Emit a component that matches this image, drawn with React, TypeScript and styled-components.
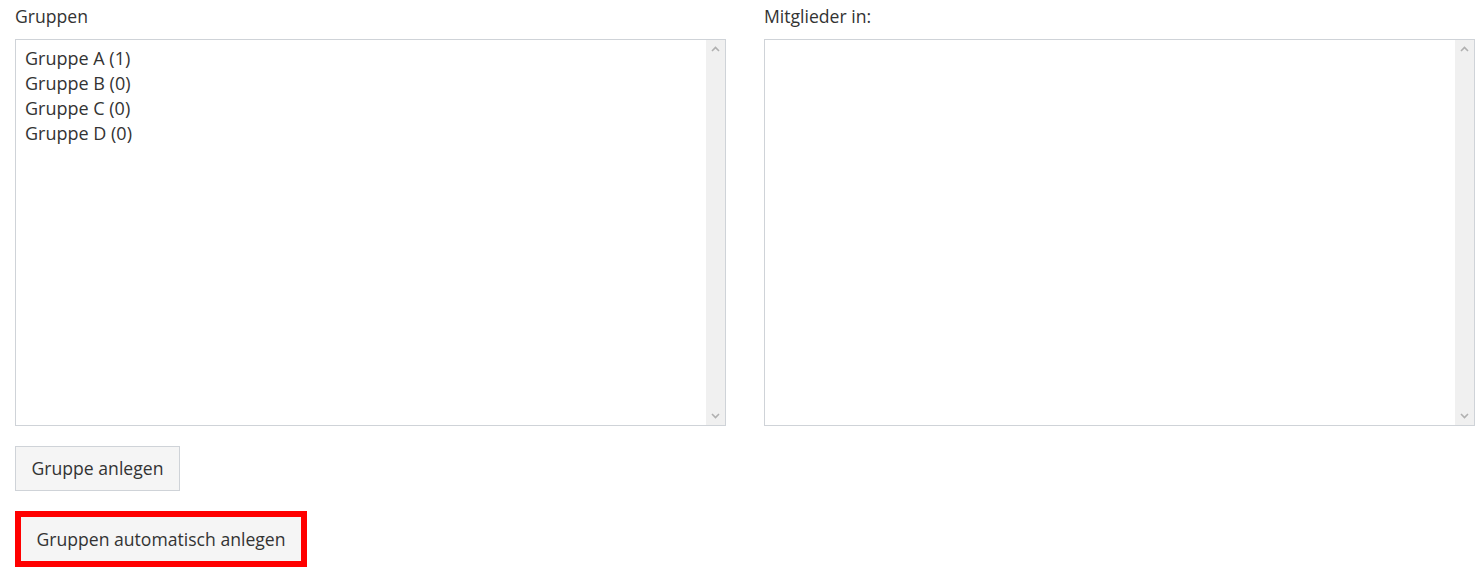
import React from "react";
import styled, { createGlobalStyle } from "styled-components";

const Global = createGlobalStyle`
  html, body { margin: 0; padding: 0; background: #fff; }
  body { font-family: "Open Sans", "Noto Sans", sans-serif; color: #333; }
  * { box-sizing: border-box; }
`;

const Page = styled.div`
  padding: 4px 0 0 15px;
  width: 1484px;
  height: 572px;
  overflow: hidden;
`;

const Columns = styled.div`
  display: grid;
  grid-template-columns: 711px 711px;
  column-gap: 38px;
`;

const Column = styled.div`
  display: flex;
  flex-direction: column;
`;

const Label = styled.div`
  font-size: 17.6px;
  line-height: 25px;
  margin-bottom: 10px;
  color: #333;
`;

const ListBox = styled.div`
  height: 387px;
  border: 1px solid #cfd3d8;
  display: flex;
  background: #fff;
`;

const Options = styled.div`
  flex: 1;
  padding: 6px 9px;
`;

const Option = styled.div`
  font-size: 18px;
  line-height: 25px;
  color: #333;
  white-space: nowrap;
`;

const Scrollbar = styled.div`
  width: 19px;
  background: #f0f0f0;
  display: flex;
  flex-direction: column;
  justify-content: space-between;
  align-items: center;
  padding: 6px 0;
`;

const Actions = styled.div`
  display: flex;
  flex-direction: column;
  align-items: flex-start;
  gap: 20px;
  margin-top: 20px;
`;

const Button = styled.button<{ $highlight?: boolean }>`
  font-family: "Open Sans", "Noto Sans", sans-serif;
  font-size: 17.6px;
  line-height: 25px;
  color: #333;
  background: #f5f5f5;
  border: ${(p) => (p.$highlight ? "6px solid #ff0000" : "1px solid #cfd3d8")};
  width: ${(p) => (p.$highlight ? "292px" : "165px")};
  height: ${(p) => (p.$highlight ? "56px" : "45px")};
  padding: 0;
  text-align: center;
  border-radius: 0;
  cursor: pointer;
  white-space: nowrap;
`;

const Chevron = ({ up }: { up?: boolean }) => (
  <svg width="9" height="6" viewBox="0 0 9 6">
    <path
      d={up ? "M1 5 L4.5 1.5 L8 5" : "M1 1 L4.5 4.5 L8 1"}
      fill="none"
      stroke="#b0b0b0"
      strokeWidth="1.6"
    />
  </svg>
);

const Select = ({ items }: { items: string[] }) => (
  <ListBox>
    <Options>
      {items.map((t) => (
        <Option key={t}>{t}</Option>
      ))}
    </Options>
    <Scrollbar>
      <Chevron up />
      <Chevron />
    </Scrollbar>
  </ListBox>
);

export default function App() {
  return (
    <>
      <Global />
      <Page>
        <Columns>
          <Column>
            <Label>Gruppen</Label>
            <Select
              items={["Gruppe A (1)", "Gruppe B (0)", "Gruppe C (0)", "Gruppe D (0)"]}
            />
          </Column>
          <Column>
            <Label>Mitglieder in:</Label>
            <Select items={[]} />
          </Column>
        </Columns>
        <Actions>
          <Button>Gruppe anlegen</Button>
          <Button $highlight>Gruppen automatisch anlegen</Button>
        </Actions>
      </Page>
    </>
  );
}
